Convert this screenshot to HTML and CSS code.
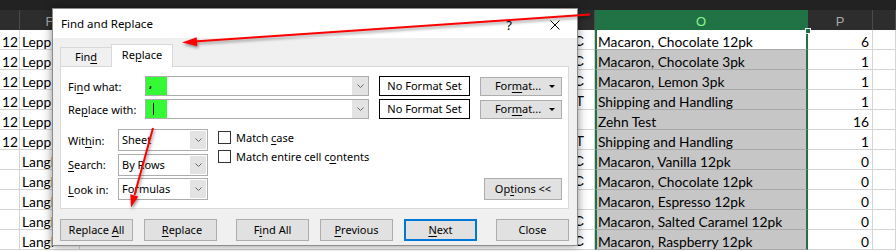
FILE: index.html
```html
<!DOCTYPE html>
<html lang="en">
<head>
    <meta charset="UTF-8">
    <title>Find and Replace</title>
    <link rel="stylesheet" href="styles.css">
</head>
<body>
<div class="screen">
    <div class="sheet">
        <div class="topbar"></div>
        <div class="row head">
            <div class="c"></div>
            <div class="c">F</div>
            <div class="c"></div>
            <div class="c o">O</div>
            <div class="c">P</div>
            <div class="c"></div>
        </div>
        <div class="row">
            <div class="c num">12</div><div class="c">Lepp</div><div class="c n">C</div>
            <div class="c o active">Macaron, Chocolate 12pk</div><div class="c num">6</div><div class="c"></div>
        </div>
        <div class="row">
            <div class="c num">12</div><div class="c">Lepp</div><div class="c n">C</div>
            <div class="c o">Macaron, Chocolate 3pk</div><div class="c num">1</div><div class="c"></div>
        </div>
        <div class="row">
            <div class="c num">12</div><div class="c">Lepp</div><div class="c n">C</div>
            <div class="c o">Macaron, Lemon 3pk</div><div class="c num">1</div><div class="c"></div>
        </div>
        <div class="row">
            <div class="c num">12</div><div class="c">Lepp</div><div class="c n">T</div>
            <div class="c o">Shipping and Handling</div><div class="c num">1</div><div class="c"></div>
        </div>
        <div class="row">
            <div class="c num">12</div><div class="c">Lepp</div><div class="c n"></div>
            <div class="c o">Zehn Test</div><div class="c num">16</div><div class="c"></div>
        </div>
        <div class="row">
            <div class="c num">12</div><div class="c">Lepp</div><div class="c n">T</div>
            <div class="c o">Shipping and Handling</div><div class="c num">1</div><div class="c"></div>
        </div>
        <div class="row">
            <div class="c"></div><div class="c">Langl</div><div class="c n">C</div>
            <div class="c o">Macaron, Vanilla 12pk</div><div class="c num">0</div><div class="c"></div>
        </div>
        <div class="row">
            <div class="c"></div><div class="c">Langl</div><div class="c n">C</div>
            <div class="c o">Macaron, Chocolate 12pk</div><div class="c num">0</div><div class="c"></div>
        </div>
        <div class="row">
            <div class="c"></div><div class="c">Langl</div><div class="c n"></div>
            <div class="c o">Macaron, Espresso 12pk</div><div class="c num">0</div><div class="c"></div>
        </div>
        <div class="row">
            <div class="c"></div><div class="c">Langl</div><div class="c n">IC</div>
            <div class="c o">Macaron, Salted Caramel 12pk</div><div class="c num">0</div><div class="c"></div>
        </div>
        <div class="row">
            <div class="c"></div><div class="c">Langl</div><div class="c n">C</div>
            <div class="c o">Macaron, Raspberry 12pk</div><div class="c num">0</div><div class="c"></div>
        </div>
        <span class="handle"></span>
    </div>

    <div class="dialog">
        <div class="titlebar">
            <span class="title">Find and Replace</span>
            <span class="help">?</span>
            <svg class="close" width="10" height="10" viewBox="0 0 10 10">
                <path d="M0.5 0.5 L9.5 9.5 M9.5 0.5 L0.5 9.5" stroke="#000" stroke-width="1" fill="none"/>
            </svg>
        </div>
        <div class="body">
            <div class="tabs">
                <div class="tab">Fin<u>d</u></div>
                <div class="tab active">Re<u>p</u>lace</div>
            </div>
            <div class="pane">
                <div class="field-row">
                    <label class="flabel">Fi<u>n</u>d what:</label>
                    <div class="combo">
                        <span class="mark">,</span>
                        <span class="drop"><svg width="7" height="4" viewBox="0 0 7 4"><path d="M0.5 0.5 L3.5 3.5 L6.5 0.5" stroke="#666" fill="none"/></svg></span>
                    </div>
                    <div class="fmtset">No Format Set</div>
                    <button class="btn fmt">For<u>m</u>at... <span class="caret"></span></button>
                </div>
                <div class="field-row">
                    <label class="flabel">Re<u>p</u>lace with:</label>
                    <div class="combo">
                        <span class="mark"><span class="cursor"></span></span>
                        <span class="drop"><svg width="7" height="4" viewBox="0 0 7 4"><path d="M0.5 0.5 L3.5 3.5 L6.5 0.5" stroke="#666" fill="none"/></svg></span>
                    </div>
                    <div class="fmtset">No Format Set</div>
                    <button class="btn fmt">For<u>m</u>at... <span class="caret"></span></button>
                </div>
                <div class="opts">
                    <div class="selects">
                        <div class="sel-row">
                            <label class="slabel">Wit<u>h</u>in:</label>
                            <div class="select">Sheet<span class="drop"><svg width="7" height="4" viewBox="0 0 7 4"><path d="M0.5 0.5 L3.5 3.5 L6.5 0.5" stroke="#666" fill="none"/></svg></span></div>
                        </div>
                        <div class="sel-row">
                            <label class="slabel"><u>S</u>earch:</label>
                            <div class="select">By Rows<span class="drop"><svg width="7" height="4" viewBox="0 0 7 4"><path d="M0.5 0.5 L3.5 3.5 L6.5 0.5" stroke="#666" fill="none"/></svg></span></div>
                        </div>
                        <div class="sel-row">
                            <label class="slabel"><u>L</u>ook in:</label>
                            <div class="select">Formulas<span class="drop"><svg width="7" height="4" viewBox="0 0 7 4"><path d="M0.5 0.5 L3.5 3.5 L6.5 0.5" stroke="#666" fill="none"/></svg></span></div>
                        </div>
                    </div>
                    <div class="checks">
                        <div class="check"><span class="box"></span><span>Match <u>c</u>ase</span></div>
                        <div class="check"><span class="box"></span><span>Match entire cell c<u>o</u>ntents</span></div>
                    </div>
                    <button class="btn options">Op<u>t</u>ions &lt;&lt;</button>
                </div>
            </div>
            <div class="actions">
                <button class="btn act">Replace <u>A</u>ll</button>
                <button class="btn act">&nbsp;<u>R</u>eplace</button>
                <button class="btn act wide">F<u>i</u>nd All</button>
                <button class="btn act"><u>P</u>revious</button>
                <button class="btn act next"><u>N</u>ext</button>
                <button class="btn act wide">Close</button>
            </div>
        </div>
    </div>

    <svg class="arrows" width="896" height="251" viewBox="0 0 896 251">
        <g class="arrow">
            <line x1="590" y1="14.5" x2="194" y2="41.6" stroke="#ff0000" stroke-width="2"/>
            <polygon points="182,42.5 197.3,46.2 196.7,37.2" fill="#ff0000"/>
            <line x1="153" y1="128" x2="134.5" y2="195" stroke="#ff0000" stroke-width="2"/>
            <polygon points="131,207.5 138.3,196.6 130.3,194.3" fill="#ff0000"/>
        </g>
    </svg>
</div>
</body>
</html>
```

FILE: styles.css
```css
* {
    box-sizing: border-box;
}
body {
    margin: 0;
    background: #fff;
}
.screen {
    position: relative;
    width: 896px;
    height: 251px;
    overflow: hidden;
}

/* spreadsheet behind the dialog */
.sheet {
    font-family: Lato, "Liberation Sans", sans-serif;
    font-size: 13.75px;
    color: #000;
}
.topbar {
    height: 10px;
    background: #222;
}
.row {
    display: grid;
    grid-template-columns: 20px 60px 515px 213px 65px 1fr;
    height: 20px;
}
.c {
    border-right: 1px solid #d4d4d4;
    border-bottom: 1px solid #d4d4d4;
    padding: 2px 2px 0;
    line-height: 19px;
    white-space: nowrap;
    overflow: hidden;
}
.num {
    text-align: right;
    padding-right: 3px;
}
.n {
    text-align: right;
    padding-right: 10px;
    font-family: "Liberation Sans", sans-serif;
    font-size: 14px;
}
.head .c {
    background: #2d2d2d;
    border-color: #4a4a4a;
    border-bottom: none;
    color: #a8a8a8;
    text-align: center;
    font-family: "Liberation Sans", sans-serif;
    font-size: 13px;
    padding-top: 2px;
}
.head .c.o {
    background: #217346;
    border-right: 2px solid #217346;
    color: #8cf58c;
}
.c.o {
    background: #c6c6c6;
    border-left: 2px solid #217346;
    border-right: 2px solid #217346;
    border-bottom-color: #a9a9a9;
    padding-left: 1px;
}
.c.o.active {
    background: #fff;
}
.handle {
    position: absolute;
    left: 805px;
    top: 28px;
    width: 6px;
    height: 6px;
    background: #217346;
    border: 1px solid #fff;
}

/* dialog */
.dialog {
    position: absolute;
    left: 52px;
    top: 8px;
    width: 526px;
    height: 238px;
    background: #f0f0f0;
    border: 1px solid #8c8c8c;
    box-shadow: 0 0 9px rgba(0, 0, 0, 0.45);
    font-family: "Noto Sans", sans-serif;
    font-size: 11px;
    color: #000;
}
.titlebar {
    height: 29px;
    background: #fff;
    display: flex;
    align-items: center;
    padding: 0 17px 0 8px;
}
.title {
    font-size: 11.5px;
}
.help {
    margin-left: auto;
    margin-right: 38px;
    font-size: 13px;
    margin-top: 2px;
}
.close {
    margin-top: 2px;
}
.body {
    padding: 6px 8px 0 7px;
}
u {
    text-decoration-thickness: 1px;
    text-underline-offset: 2px;
}
.tabs {
    display: flex;
    align-items: flex-end;
    height: 22px;
}
.tab {
    width: 52px;
    height: 19px;
    border: 1px solid #d9d9d9;
    border-bottom: none;
    text-align: center;
    line-height: 17px;
}
.tab.active {
    width: 62px;
    height: 23px;
    margin-left: -1px;
    margin-bottom: -1px;
    background: #fff;
    position: relative;
    z-index: 1;
    line-height: 20px;
}
.pane {
    height: 143px;
    background: #fff;
    border: 1px solid #d9d9d9;
    padding: 9px 6px 0 7px;
}
.field-row {
    display: flex;
    align-items: center;
    height: 20px;
    margin-bottom: 3px;
}
.flabel {
    width: 77px;
}
.combo {
    width: 224px;
    height: 20px;
    border: 1px solid #acacac;
    display: flex;
    align-items: stretch;
}
.mark {
    width: 21px;
    background: #35f935;
    padding-left: 3px;
    line-height: 14px;
    font-weight: bold;
}
.cursor {
    display: inline-block;
    width: 1px;
    height: 12px;
    margin: 3px 0 0 4px;
    background: #000;
}
.drop {
    margin-left: auto;
    width: 16px;
    background: #e3e3e3;
    display: flex;
    align-items: center;
    justify-content: center;
}
.fmtset {
    width: 91px;
    height: 20px;
    margin-left: 10px;
    border: 1px solid #000;
    text-align: center;
    line-height: 17px;
}
.btn {
    font: inherit;
    color: #000;
    background: #e1e1e1;
    border: 1px solid #adadad;
    padding: 0;
    margin: 0;
    line-height: 16px;
}
.fmt {
    width: 82px;
    height: 19px;
    margin-left: 10px;
    position: relative;
    padding-right: 6px;
}
.caret {
    position: absolute;
    right: 6px;
    top: 7px;
    border-left: 3px solid transparent;
    border-right: 3px solid transparent;
    border-top: 3px solid #000;
}
.opts {
    display: flex;
    margin-top: 10px;
    height: 71px;
}
.selects {
    display: flex;
    flex-direction: column;
    gap: 2.5px;
}
.sel-row {
    display: flex;
    align-items: center;
    height: 22px;
}
.slabel {
    width: 50px;
}
.select {
    width: 90px;
    height: 22px;
    border: 1px solid #acacac;
    display: flex;
    align-items: stretch;
    padding: 1px 1px 1px 3px;
    line-height: 18px;
}
.checks {
    margin-left: 10px;
    padding-top: 2px;
    display: flex;
    flex-direction: column;
    gap: 6px;
}
.check {
    display: flex;
    align-items: center;
    height: 13px;
}
.box {
    width: 13px;
    height: 13px;
    border: 1px solid #333;
    background: #fff;
    margin-right: 5px;
}
.options {
    margin-left: auto;
    align-self: flex-end;
    width: 78px;
    height: 22px;
}
.actions {
    display: flex;
    margin-top: 10px;
    gap: 11px;
}
.act {
    width: 73px;
    height: 22px;
}
.act.wide {
    margin-left: 8px;
}
.next {
    border: 2px solid #0078d7;
}

/* red annotation arrows */
.arrows {
    position: absolute;
    left: 0;
    top: 0;
    pointer-events: none;
}
.arrow {
    filter: drop-shadow(1px 2px 1.5px rgba(0, 0, 0, 0.4));
}
```
